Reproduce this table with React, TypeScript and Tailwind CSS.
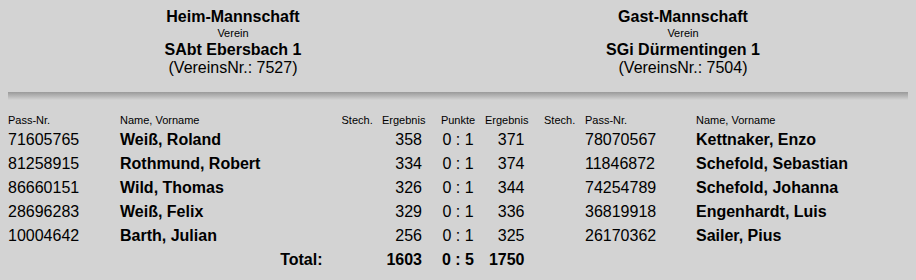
const home = [
  { pass: "71605765", name: "Weiß, Roland", result: 358 },
  { pass: "81258915", name: "Rothmund, Robert", result: 334 },
  { pass: "86660151", name: "Wild, Thomas", result: 326 },
  { pass: "28696283", name: "Weiß, Felix", result: 329 },
  { pass: "10004642", name: "Barth, Julian", result: 256 },
];

const guest = [
  { pass: "78070567", name: "Kettnaker, Enzo", result: 371 },
  { pass: "11846872", name: "Schefold, Sebastian", result: 374 },
  { pass: "74254789", name: "Schefold, Johanna", result: 344 },
  { pass: "36819918", name: "Engenhardt, Luis", result: 336 },
  { pass: "26170362", name: "Sailer, Pius", result: 325 },
];

const cols = "grid grid-cols-[112px_221.5px_40.5px_54px_44px_64px_41px_111px_1fr]";

function TeamHead({ title, club, nr }: { title: string; club: string; nr: string }) {
  return (
    <div className="text-center">
      <div className="text-[16px] leading-[18px] font-bold">{title}</div>
      <div className="text-[11px] leading-[15px]">Verein</div>
      <div className="text-[16px] leading-[18px] font-bold">{club}</div>
      <div className="text-[16px] leading-[18px]">(VereinsNr.: {nr})</div>
    </div>
  );
}

export default function App() {
  return (
    <div
      className="w-[916px] h-[280px] bg-[#d3d3d3] text-black px-2 pt-2"
      style={{ fontFamily: '"Liberation Sans", Arial, sans-serif' }}
    >
      <div className="grid grid-cols-2">
        <TeamHead title="Heim-Mannschaft" club="SAbt Ebersbach 1" nr="7527" />
        <TeamHead title="Gast-Mannschaft" club="SGi Dürmentingen 1" nr="7504" />
      </div>

      <div className="mt-[15px] h-[8px] bg-gradient-to-b from-[#9a9a9a] to-[#d3d3d3]" />

      <div className={`${cols} mt-[12px] text-[11px] leading-[16px]`}>
        <div>Pass-Nr.</div>
        <div>Name, Vorname</div>
        <div>Stech.</div>
        <div>Ergebnis</div>
        <div className="text-center">Punkte</div>
        <div className="pl-[5px]">Ergebnis</div>
        <div>Stech.</div>
        <div>Pass-Nr.</div>
        <div>Name, Vorname</div>
      </div>

      {home.map((h, i) => {
        const g = guest[i];
        return (
          <div key={h.pass} className={`${cols} text-[16px] leading-[24px]`}>
            <div>{h.pass}</div>
            <div className="font-bold">{h.name}</div>
            <div></div>
            <div className="text-right pr-[14px]">{h.result}</div>
            <div className="text-center">0 : 1</div>
            <div className="text-right pr-[19.5px]">{g.result}</div>
            <div></div>
            <div>{g.pass}</div>
            <div className="font-bold">{g.name}</div>
          </div>
        );
      })}

      <div className={`${cols} text-[16px] leading-[24px] font-bold`}>
        <div></div>
        <div className="text-right pr-[19px]">Total:</div>
        <div></div>
        <div className="text-right pr-[14px]">1603</div>
        <div className="text-center">0 : 5</div>
        <div className="text-right pr-[19.5px]">1750</div>
        <div></div>
        <div></div>
        <div></div>
      </div>
    </div>
  );
}
